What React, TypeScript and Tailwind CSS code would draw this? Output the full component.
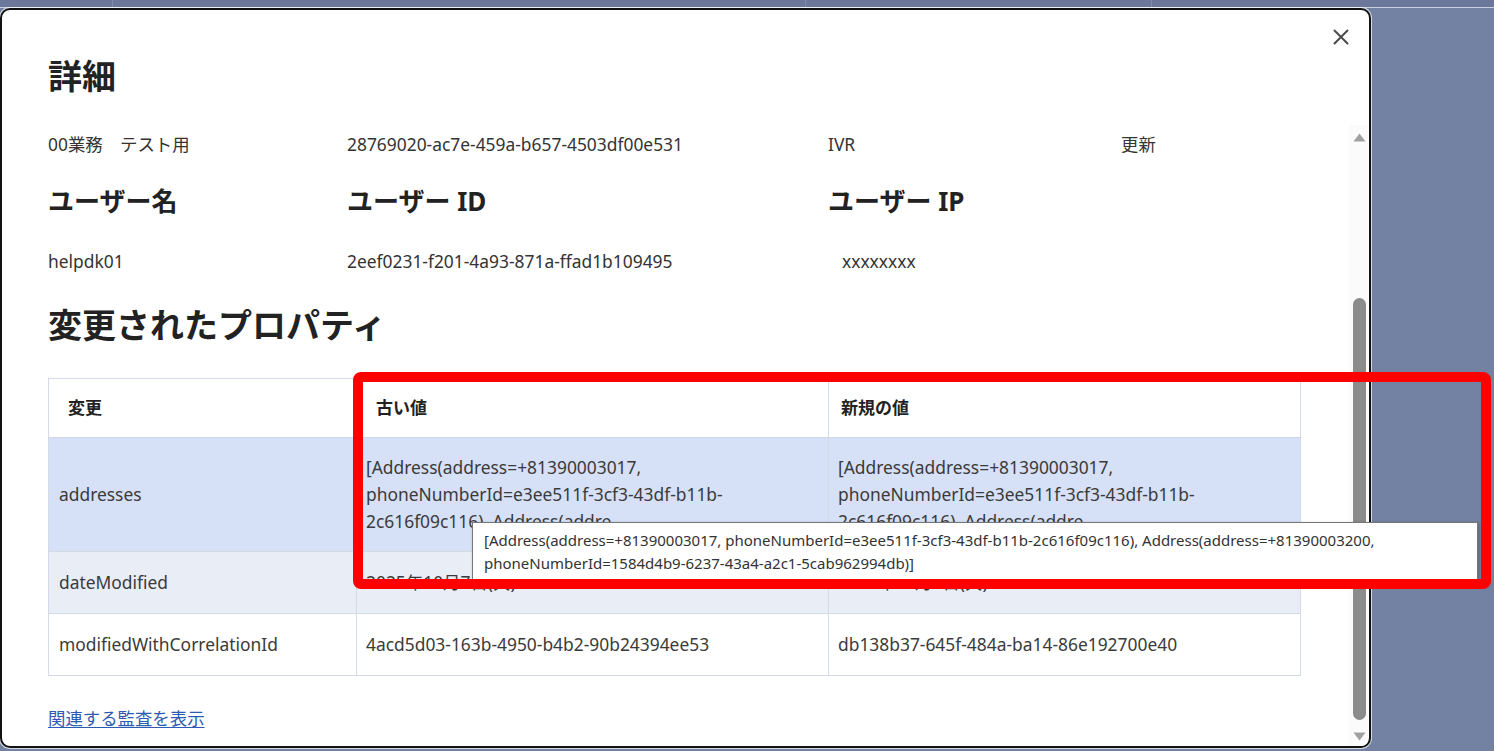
import { Fragment } from 'react';

const FONT = "font-['Noto_Sans','Noto_Sans_CJK_JP',sans-serif]";

const ROWS = [
  {
    name: 'addresses',
    oldLines: [
      '[Address(address=+81390003017,',
      'phoneNumberId=e3ee511f-3cf3-43df-b11b-',
      '2c616f09c116), Address(addre',
    ],
    newLines: [
      '[Address(address=+81390003017,',
      'phoneNumberId=e3ee511f-3cf3-43df-b11b-',
      '2c616f09c116), Address(addre',
    ],
    bg: 'bg-[#d6e0f6]',
    h: 'h-[114px]',
  },
  {
    name: 'dateModified',
    oldLines: ['2025年10月7日(火) 10:15:32'],
    newLines: ['2025年10月7日(火) 10:18:05'],
    bg: 'bg-[#e9edf5]',
    h: 'h-[62px]',
  },
  {
    name: 'modifiedWithCorrelationId',
    oldLines: ['4acd5d03-163b-4950-b4b2-90b24394ee53'],
    newLines: ['db138b37-645f-484a-ba14-86e192700e40'],
    bg: 'bg-white',
    h: 'h-[62px]',
  },
];

function Lines({ lines }: { lines: string[] }) {
  return (
    <div className="leading-[27px] overflow-hidden whitespace-nowrap">
      {lines.map((l, i) => (
        <Fragment key={i}>
          {l}
          {i < lines.length - 1 && <br />}
        </Fragment>
      ))}
    </div>
  );
}

function Scrollbar() {
  return (
    <div className="w-[19px] mr-[1px] flex flex-col bg-[#fbfbfb]">
      <div className="h-[17px] flex items-end justify-center pl-[4px] pr-[2px]">
        <svg width="13" height="9" viewBox="0 0 13 9">
          <path d="M6.5 0.5 L12.5 8.5 L0.5 8.5 Z" fill="#a0a0a0" />
        </svg>
      </div>
      <div className="h-[156px]" />
      <div className="pl-[4px] pr-[2px]">
        <div className="h-[422px] rounded-full bg-[#8b8b8b]" />
      </div>
      <div className="flex-1 flex items-end justify-center pl-[4px] pr-[2px] pb-[5px]">
        <svg width="13" height="9" viewBox="0 0 13 9">
          <path d="M0.5 0.5 L12.5 0.5 L6.5 8.5 Z" fill="#a0a0a0" />
        </svg>
      </div>
    </div>
  );
}

export default function App() {
  return (
    <div className={`relative w-[1494px] h-[751px] overflow-hidden bg-[#7381a3] ${FONT}`}>
      {/* page behind the dialog */}
      <div className="h-[8px] flex bg-[#6b789c] border-b border-[#c9cfdf]">
        <div className="w-[113px] border-r border-[#7f8bab]" />
        <div className="w-[693px] border-r border-[#7f8bab]" />
        <div className="w-[346px] border-r border-[#7f8bab]" />
        <div className="flex-1" />
      </div>

      <div className="w-[1371px] h-[740px] flex flex-col bg-white border-2 border-[#111] rounded-[10px] shadow-[0_0_0_1px_rgba(255,255,255,0.7)] overflow-hidden">
        <div className="h-[115px] flex justify-between shrink-0">
          <h1 className="pl-[46px] pt-[45px] text-[34px] leading-[42px] font-bold text-[#222]">詳細</h1>
          <button className="mt-[19px] mr-[20px] w-[16px] h-[16px]">
            <svg width="16" height="16" viewBox="0 0 16 16">
              <path d="M1.5 1.5 L14.5 14.5 M14.5 1.5 L1.5 14.5" stroke="#4a4a4a" strokeWidth="2" strokeLinecap="round" />
            </svg>
          </button>
        </div>

        <div className="flex-1 flex min-h-0">
          <div className="flex-1 pl-[46px] overflow-hidden text-[#333]">
            <div className="h-[38px] grid grid-cols-[299px_481px_293px_1fr] items-center text-[17.4px]">
              <div>00業務　テスト用</div>
              <div>28769020-ac7e-459a-b657-4503df00e531</div>
              <div>IVR</div>
              <div>更新</div>
            </div>
            <div className="h-[76px] grid grid-cols-[299px_481px_293px_1fr] items-center text-[26px] font-bold text-[#222]">
              <div>ユーザー名</div>
              <div>ユーザー ID</div>
              <div>ユーザー IP</div>
              <div />
            </div>
            <div className="h-[44px] grid grid-cols-[299px_481px_293px_1fr] items-center text-[17.4px]">
              <div>helpdk01</div>
              <div>2eef0231-f201-4a93-871a-ffad1b109495</div>
              <div className="pl-[14px]">xxxxxxxx</div>
              <div />
            </div>
            <h2 className="h-[84px] flex items-center text-[34px] font-bold text-[#222]">変更されたプロパティ</h2>

            <div className="mt-[11px] w-[1253px] border-l border-t border-[#d3d9e6] text-[17.4px] text-[#3a3a3a]">
              <div className="grid grid-cols-[308px_472px_472px] h-[59px] bg-white border-b border-[#cfd6e5] text-[17px] font-bold text-[#222]">
                <div className="flex items-center px-[19px] border-r border-[#d3d9e6]">変更</div>
                <div className="flex items-center px-[19px] border-r border-[#d3d9e6]">古い値</div>
                <div className="flex items-center px-[12px] border-r border-[#d3d9e6]">新規の値</div>
              </div>
              {ROWS.map((r) => (
                <div key={r.name} className={`grid grid-cols-[308px_472px_472px] ${r.h} ${r.bg} border-b border-[#d3d9e6]`}>
                  <div className="flex items-center px-[10px] border-r border-[#d3d9e6]">{r.name}</div>
                  <div className="flex items-center px-[9px] border-r border-[#d3d9e6]">
                    <Lines lines={r.oldLines} />
                  </div>
                  <div className="flex items-center px-[9px] border-r border-[#d3d9e6]">
                    <Lines lines={r.newLines} />
                  </div>
                </div>
              ))}
            </div>

            <div className="h-[84px] flex items-center">
              <a className="text-[17.4px] text-[#2d5bb3] underline underline-offset-2">関連する監査を表示</a>
            </div>
          </div>
          <Scrollbar />
        </div>
      </div>

      {/* hover tooltip */}
      <div className="absolute left-[472px] top-[522px] w-[1006px] h-[58px] bg-white border border-[#767676] shadow-[1px_1px_3px_rgba(0,0,0,0.25)] px-[11px] pt-[6px] text-[15px] leading-[23px] text-[#333] whitespace-nowrap">
        [Address(address=+81390003017, phoneNumberId=e3ee511f-3cf3-43df-b11b-2c616f09c116), Address(address=+81390003200,
        <br />
        phoneNumberId=1584d4b9-6237-43a4-a2c1-5cab962994db)]
      </div>

      {/* annotation frame */}
      <div className="absolute left-[353px] top-[372px] w-[1138px] h-[217px] border-[10px] border-[#ff0000] rounded-[8px]" />
    </div>
  );
}
